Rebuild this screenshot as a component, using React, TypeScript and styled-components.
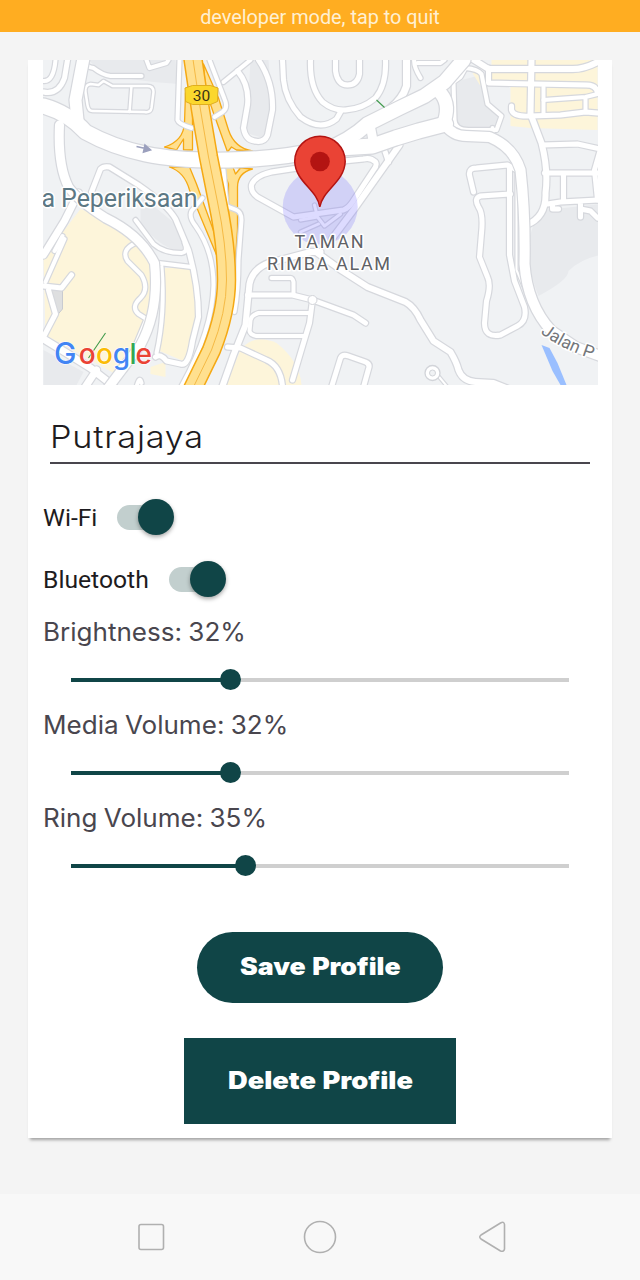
import React from "react";
import styled, { createGlobalStyle } from "styled-components";

const teal = "#104547";

const GlobalStyle = createGlobalStyle`
  * { box-sizing: border-box; }
  body { margin: 0; background: #f4f4f4; }
`;

const Screen = styled.div`
  width: 640px;
  height: 1280px;
  display: flex;
  flex-direction: column;
  background: #f4f4f4;
  overflow: hidden;
`;

const DevBanner = styled.header`
  height: 32px;
  flex: none;
  background: #ffad21;
  color: #fff0d2;
  font: 400 19.85px/35px Roboto, sans-serif;
  text-align: center;
`;

const Card = styled.main`
  width: 584px;
  height: 1078px;
  flex: none;
  margin: 28px 0 0 28px;
  padding: 0 15px;
  background: #fff;
  box-shadow: 0 4px 3px -2px rgba(0, 0, 0, 0.34);
  display: flex;
  flex-direction: column;
`;

const MapView = styled.svg`
  display: block;
  width: 555px;
  height: 325px;
  flex: none;
  margin-left: -0.5px;
  background: #f0f2f4;
`;

const NameField = styled.div`
  height: 51px;
  margin: 28px 7px 0;
  flex: none;
  border-bottom: 2px solid #49464e;
  color: #1d1b20;
  font: 300 31px/48px Inter, sans-serif;
  letter-spacing: 0.7px;
`;

const WideText = styled.span<{ $stretch: number; $center?: boolean }>`
  display: inline-block;
  white-space: nowrap;
  transform: scaleX(${(p) => p.$stretch});
  transform-origin: ${(p) => (p.$center ? "center" : "left")};
`;

const Toggles = styled.section`
  display: flex;
  flex-direction: column;
  padding-top: 22px;
  flex: none;
`;

const ToggleRow = styled.label`
  height: 62px;
  display: flex;
  align-items: center;
  gap: 20px;
  color: #1d1b20;
  font: 400 24.7px/60px Roboto, sans-serif;
`;

const ToggleText = styled.span<{ $width: number }>`
  width: ${(p) => p.$width}px;
  white-space: nowrap;
  padding-top: 2px;
`;

const Track = styled.span`
  width: 50px;
  height: 25px;
  border-radius: 13px;
  background: #c2cfce;
  display: flex;
  align-items: center;
  padding-left: 21px;
`;

const Thumb = styled.span`
  width: 36px;
  height: 36px;
  flex: none;
  border-radius: 50%;
  background: ${teal};
  box-shadow: 0 2px 4px rgba(0, 0, 0, 0.35);
`;

const Sliders = styled.section`
  display: flex;
  flex-direction: column;
  flex: none;
`;

const SliderBlock = styled.div`
  height: 93px;
  display: flex;
  flex-direction: column;
`;

const SliderLabel = styled.div`
  height: 59px;
  color: #49464e;
  font: 400 25px/45px Inter, sans-serif;
  word-spacing: -1px;
`;

const Rail = styled.div`
  height: 21px;
  margin: 0 28px;
  display: flex;
  align-items: center;
`;

const Filled = styled.span`
  height: 4px;
  background: ${teal};
`;

const Knob = styled.span`
  width: 21px;
  height: 21px;
  flex: none;
  margin: 0 -10.5px;
  border-radius: 50%;
  background: ${teal};
  z-index: 1;
`;

const Rest = styled.span`
  height: 4px;
  flex: 1;
  background: #cfcfcf;
`;

const Actions = styled.section`
  display: flex;
  flex-direction: column;
  align-items: center;
  gap: 35px;
  padding-top: 43px;
`;

const Action = styled.button<{ $round?: boolean }>`
  width: ${(p) => (p.$round ? 246 : 272)}px;
  height: ${(p) => (p.$round ? 71 : 86)}px;
  border: 0;
  padding: 0 0 2px;
  border-radius: ${(p) => (p.$round ? 36 : 0)}px;
  background: ${teal};
  color: #fff;
  font: 900 24px Inter, sans-serif;
  word-spacing: 1px;
`;

const NavBar = styled.nav`
  height: 86px;
  flex: none;
  margin-top: auto;
  background: #f8f8f8;
  display: flex;
  justify-content: space-between;
  padding: 0 130px 0 134px;
  align-items: center;
`;

const NavIcon = styled.svg<{ $shift?: number }>`
  width: 34px;
  height: 34px;
  margin-right: ${(p) => p.$shift || 0}px;
  fill: none;
  stroke: #b0b0b0;
  stroke-width: 1.6;
`;

type Road = [string, number];

const minorRoads: Road[] = [
  ["M43 81Q53 82 55 60", 4],
  ["M43 92Q58 95 64 78L67 60", 5],
  ["M84 62Q86 67 93 68Q102 75 110 76L141 76", 4],
  ["M146 60L149 68L166 63L168 60", 4],
  ["M90 84L98 85L103 81L112 86L147 86Q153 86 153 92L151 108Q150 113 144 112L92 111Q88 111 87 105L85 92Q84 85 90 84M131 86L129 112", 2.5],
  ["M223 82L250 60", 4],
  ["M237 71Q249 85 247 105L243 128Q245 140 254 141Q264 143 267 135L272 110Q273 82 258 60", 5],
  ["M282 60L283 80Q285 100 300 117Q320 132 336 119L340 112", 5],
  ["M310 60Q309 88 322 102Q333 111 345 110Q362 109 375 98Q386 85 385 60", 5],
  ["M335 60V71Q337 85 347 85Q357 85 359 74V60", 5],
  ["M406 60V86Q402 99 390 108", 7],
  ["M420 78Q412 65 414 58M417 63H440L444 60", 4],
  ["M375 162Q370 157 363 159L343 161L271 172Q254 176 251 185Q250 192 257 197L293 217L343 210Q348 208 352 202L373 170Q377 165 375 162", 5],
  ["M383 147L388 162", 5],
  ["M399 145L353 210L332 238", 6],
  ["M314 205L317 217L300 220M317 217L324 226L340 214M300 232L318 224", 3],
  ["M320 252L310 252L268 263Q252 269 249 284L245 325L233 355L222 386", 6],
  ["M271 278H290Q292 278 293 282V294", 4],
  ["M247 295H292L312 300L353 315L365 323", 5],
  ["M312 300L309 323L300 353L292 380", 5],
  ["M309 313H258Q251 315 250 320L249 331Q250 335 256 336H303", 4],
  ["M227 347L240 348L266 360Q280 366 282 386", 5],
  ["M331 387L340 358Q342 354 348 356L365 362Q370 364 368 369L363 387", 5],
  ["M317 253L342 271L367 287L405 302Q414 307 420 320L433 341L450 352Q456 362 458 370Q462 381 475 382L493 383L508 389", 6],
  ["M437 375L447 387", 2],
  ["M473 192L469 175Q468 168 476 168L507 165L518 171", 5],
  ["M510 194L480 196Q473 198 478 207Q483 214 481 233L479 257L487 277Q491 285 486 301L484 323Q484 338 500 335L517 326Q527 321 524 307L514 281L509 255V167", 5],
  ["M516 172V270L532 307", 2],
  ["M531 60L530 114L541 143Q548 170 545 193Q546 217 526 225", 6],
  ["M472 59L488 69H572Q584 69 597 62", 6],
  ["M488 68V83L586 85Q596 85 597 93", 5],
  ["M543 87V114", 4],
  ["M511 106V110Q513 117 530 116L560 115L585 112L597 113", 5],
  ["M543 100L585 97L597 94M585 98V112", 4],
  ["M542 145L577 144L600 149M600 149L594 170L597 200", 5],
  ["M544 173H598M547 204L560 202L598 200M563 173V202M552 204V209H558M580 204V217M580 209L590 211L597 218", 5],
  ["M465 68L460 77L453 82L454 119Q454 130 468 130H496L501 116L487 104L481 74Q477 69 465 68M492 133V128", 4],
  ["M78 193L64 221L43 255", 7],
  ["M64 239L45 282M62 236L54 251", 4],
  ["M71 275L61 288L43 286M48 290L55 314L43 337", 5],
  ["M91 192L100 169Q103 166 109 167L138 185Q167 205 175 219L188 250Q198 285 198 317L192 341Q188 367 180 364L166 361Q160 353 155 357", 5],
  ["M135 220L153 244Q163 253 181 253Q188 252 184 243", 4],
  ["M158 263L191 267M161 267Q165 313 156 353", 4],
  ["M135 243Q120 250 127 261L141 275Q149 289 140 298Q130 307 138 314L146 319L136 343", 4],
  ["M141 383Q139 375 136 387", 4],
  ["M43 339L66 353L90 368L113 386M96 370L84 388", 7],
];

const majorRoads: Road[] = [
  ["M59 125Q57 165 68 187Q78 201 105 218Q140 235 154 263Q159 310 140 345L106 390", 9],
  ["M77 120L75 100L83 58", 12],
  ["M43 106Q68 113 85 132Q112 147 145 154Q178 161 228 160Q280 159 322 149L372 146L395 138L418 131L445 124", 15],
  ["M322 151Q350 140 367 124L399 108L424 96L444 82L463 60", 14],
  ["M369 122L373 143", 9],
  ["M438 91Q450 102 444 121", 13],
  ["M444 124Q452 136 466 136L489 137Q513 147 520 170Q525 215 524 264Q527 305 551 331L575 347L600 356", 10],
];

const frontageRoads: Road[] = [
  ["M179 60L177 120Q178 124 191 128", 4],
  ["M209 60L224 99Q228 108 222 112L214 117", 4],
  ["M202 198L191 211Q188 217 195 226Q213 251 213 285Q212 330 181 386", 4],
  ["M223 170L226 206L236 210Q241 212 241 220L238 260Q238 290 234 312", 4],
];

const Roads = ({ items }: { items: Road[] }) => (
  <g fill="none" strokeLinecap="round" strokeLinejoin="round">
    {items.map(([d, w]) => (
      <path key={"c" + d} d={d} stroke="#d6d8dd" strokeWidth={w + 2.4} />
    ))}
    {items.map(([d, w]) => (
      <path key={d} d={d} stroke="#fff" strokeWidth={w} />
    ))}
  </g>
);

const highway = "M192 56L200 110L208 157L217 202Q226 245 226 280Q226 312 211 350L191 391";

const logoLetters: [string, number, string][] = [
  ["G", 53.5, "#4285f4"],
  ["o", 78.3, "#ea4335"],
  ["o", 95.6, "#fbbc05"],
  ["g", 112.3, "#4285f4"],
  ["l", 129, "#34a853"],
  ["e", 135, "#ea4335"],
];

const LocationMap = () => (
  <MapView viewBox="42.5 60 555 325">
    <g fill="#e8eaed">
      <path d="M88 60H175L178 84L153 82L105 76Z" />
      <path d="M454 82L480 75L486 104L500 117L497 129L457 127Z" />
      <path d="M533 225L545 210L600 204V255Q580 259 568 271Q568 280 538 296Q527 270 528 240Z" />
      <path d="M140 195L176 225L184 252Q160 250 140 222Z" />
      <path d="M250 60H268L272 113L262 138L246 133Z" />
      <path d="M43 350L83 372L76 385H43Z" />
    </g>
    <g fill="#fdf5da">
      <path d="M80 209L120 225L148 255L157 300L143 345L115 374L45 335L43 257Z" />
      <path d="M163 268H191L199 310L185 362L157 350Z" />
      <path d="M150 367L165 362V377L150 374Z" />
      <path d="M491 60H597V130L530 128L510 126V87L491 80Z" />
      <path d="M472 73H480V86Z" />
      <path d="M240 350Q253 333 276 343Q299 361 301 385H225Z" />
    </g>
    <path d="M51 287L62 291V309L56 316L50 306Z" fill="#dedfe0" stroke="#c9cbd0" />
    <Roads items={minorRoads} />
    <circle cx="432" cy="373" r="7.5" fill="#fff" stroke="#d2d4d9" strokeWidth="1.3" />
    <circle cx="432" cy="373" r="3" fill="#f0f2f4" stroke="#d2d4d9" />
    <circle cx="312" cy="300" r="4.5" fill="#fff" stroke="#d2d4d9" />
    <g fill="#ffe08f" stroke="#f5a914" strokeWidth="1.3" strokeLinejoin="round">
      <path d="M185 93L184 123Q183 141 164 147L176 150L183 139V150H192V100Z" />
      <path d="M169 167Q184 172 189 190L201 219L219 262L215 236L196 184L189 167Z" />
      <path d="M203 64L218 98L228 130Q234 148 252 151L236 150L231 147L227 152L213 113L205 90Z" />
      <path d="M221 166L252 169Q237 173 237 187V230L233 287L224 240L228 222V184ZM232 166L235 174L240 168" />
    </g>
    <Roads items={frontageRoads} />
    <Roads items={majorRoads} />
    <g fill="none">
      <path d={highway} stroke="#f5a914" strokeWidth="19.5" />
      <path d={highway} stroke="#ffe08f" strokeWidth="16.5" />
      <path d={highway} stroke="#f5ba45" strokeWidth="1" />
    </g>
    <path d="M184.500 88L192 85.5H210L217.5 88L217 101.500L210 104.500H192L185 101.500Z" fill="#fbd72d" stroke="#dfae20" />
    <text x="201" y="101" textAnchor="middle" fontFamily="Roboto, sans-serif" fontSize="15.5" fill="#3a3217">30</text>
    <path d="M136 146.500L145 148.500M144.500 145L150 150L143 152Z" stroke="#9ba0bd" strokeWidth="1.6" fill="#9ba0bd" />
    <path d="M376 100L384 107.5M88 358L105 333" stroke="#3f9a4b" strokeWidth="1.1" />
    <circle cx="319.700" cy="207" r="37.5" fill="#6f68ff" fillOpacity="0.24" />
    <path d="M541 345L549 348L557 363L566 385H560L552 371Z" fill="#9abfff" />
    <path d="M319.3 207C317 190 295 182 294.2 161.5A25.2 25.2 0 0 1 344.700 161.5C344 182 322 190 319.3 207Z" fill="#ea4335" stroke="#b31412" strokeWidth="1.5" />
    <circle cx="319.5" cy="161.500" r="9.800" fill="#b31412" />
    <g fontFamily="Roboto, sans-serif" stroke="#fff" strokeWidth="3" strokeLinejoin="round" paintOrder="stroke">
      <text x="41" y="207" fontSize="25" fill="#5c7884" textLength="156">a Peperiksaan</text>
      <g fontSize="18" fill="#5f6266">
        <text x="294" y="248" textLength="69">TAMAN</text>
        <text x="266.500" y="269.500" textLength="123">RIMBA ALAM</text>
      </g>
      <path id="jalan" d="M540 333Q563 351 602 362" fill="none" stroke="none" />
      <text fontSize="17.5" fill="#74777b"><textPath href="#jalan">Jalan P</textPath></text>
    </g>
    <text y="364" fontFamily="Inter, sans-serif" fontWeight="500" fontSize="28" stroke="#fff" strokeWidth="1.2" paintOrder="stroke">
      {logoLetters.map(([letter, x, fill]) => (
        <tspan key={x} x={x} fill={fill} fontSize={letter === "G" ? 30 : 28}>{letter}</tspan>
      ))}
    </text>
  </MapView>
);

const toggles = [
  { label: "Wi-Fi", width: 54 },
  { label: "Bluetooth", width: 106 },
];

const levels = [
  { label: "Brightness: 32%", value: 32 },
  { label: "Media Volume: 32%", value: 32 },
  { label: "Ring Volume: 35%", value: 35 },
];

export default function App() {
  return (
    <Screen>
      <GlobalStyle />
      <DevBanner>developer mode, tap to quit</DevBanner>
      <Card>
        <LocationMap />
        <NameField>
          <WideText $stretch={1.105}>Putrajaya</WideText>
        </NameField>
        <Toggles>
          {toggles.map((t) => (
            <ToggleRow key={t.label}>
              <ToggleText $width={t.width}>{t.label}</ToggleText>
              <Track><Thumb /></Track>
            </ToggleRow>
          ))}
        </Toggles>
        <Sliders>
          {levels.map((l) => (
            <SliderBlock key={l.label}>
              <SliderLabel>
                <WideText $stretch={1.042}>{l.label}</WideText>
              </SliderLabel>
              <Rail>
                <Filled style={{ width: `${l.value}%` }} />
                <Knob />
                <Rest />
              </Rail>
            </SliderBlock>
          ))}
        </Sliders>
        <Actions>
          <Action $round><WideText $center $stretch={1.11}>Save Profile</WideText></Action>
          <Action><WideText $center $stretch={1.135}>Delete Profile</WideText></Action>
        </Actions>
      </Card>
      <NavBar>
        <NavIcon viewBox="0 0 34 34"><rect x="5" y="4.500" width="24.500" height="25" rx="2" /></NavIcon>
        <NavIcon viewBox="0 0 34 34" $shift={4}><circle cx="17" cy="17" r="15.500" /></NavIcon>
        <NavIcon viewBox="0 0 34 34"><path d="M5 15L24.500 3Q28 1 28.500 4.500V29Q28 32 24.500 31L5 19Q2.500 17 5 15Z" /></NavIcon>
      </NavBar>
    </Screen>
  );
}
